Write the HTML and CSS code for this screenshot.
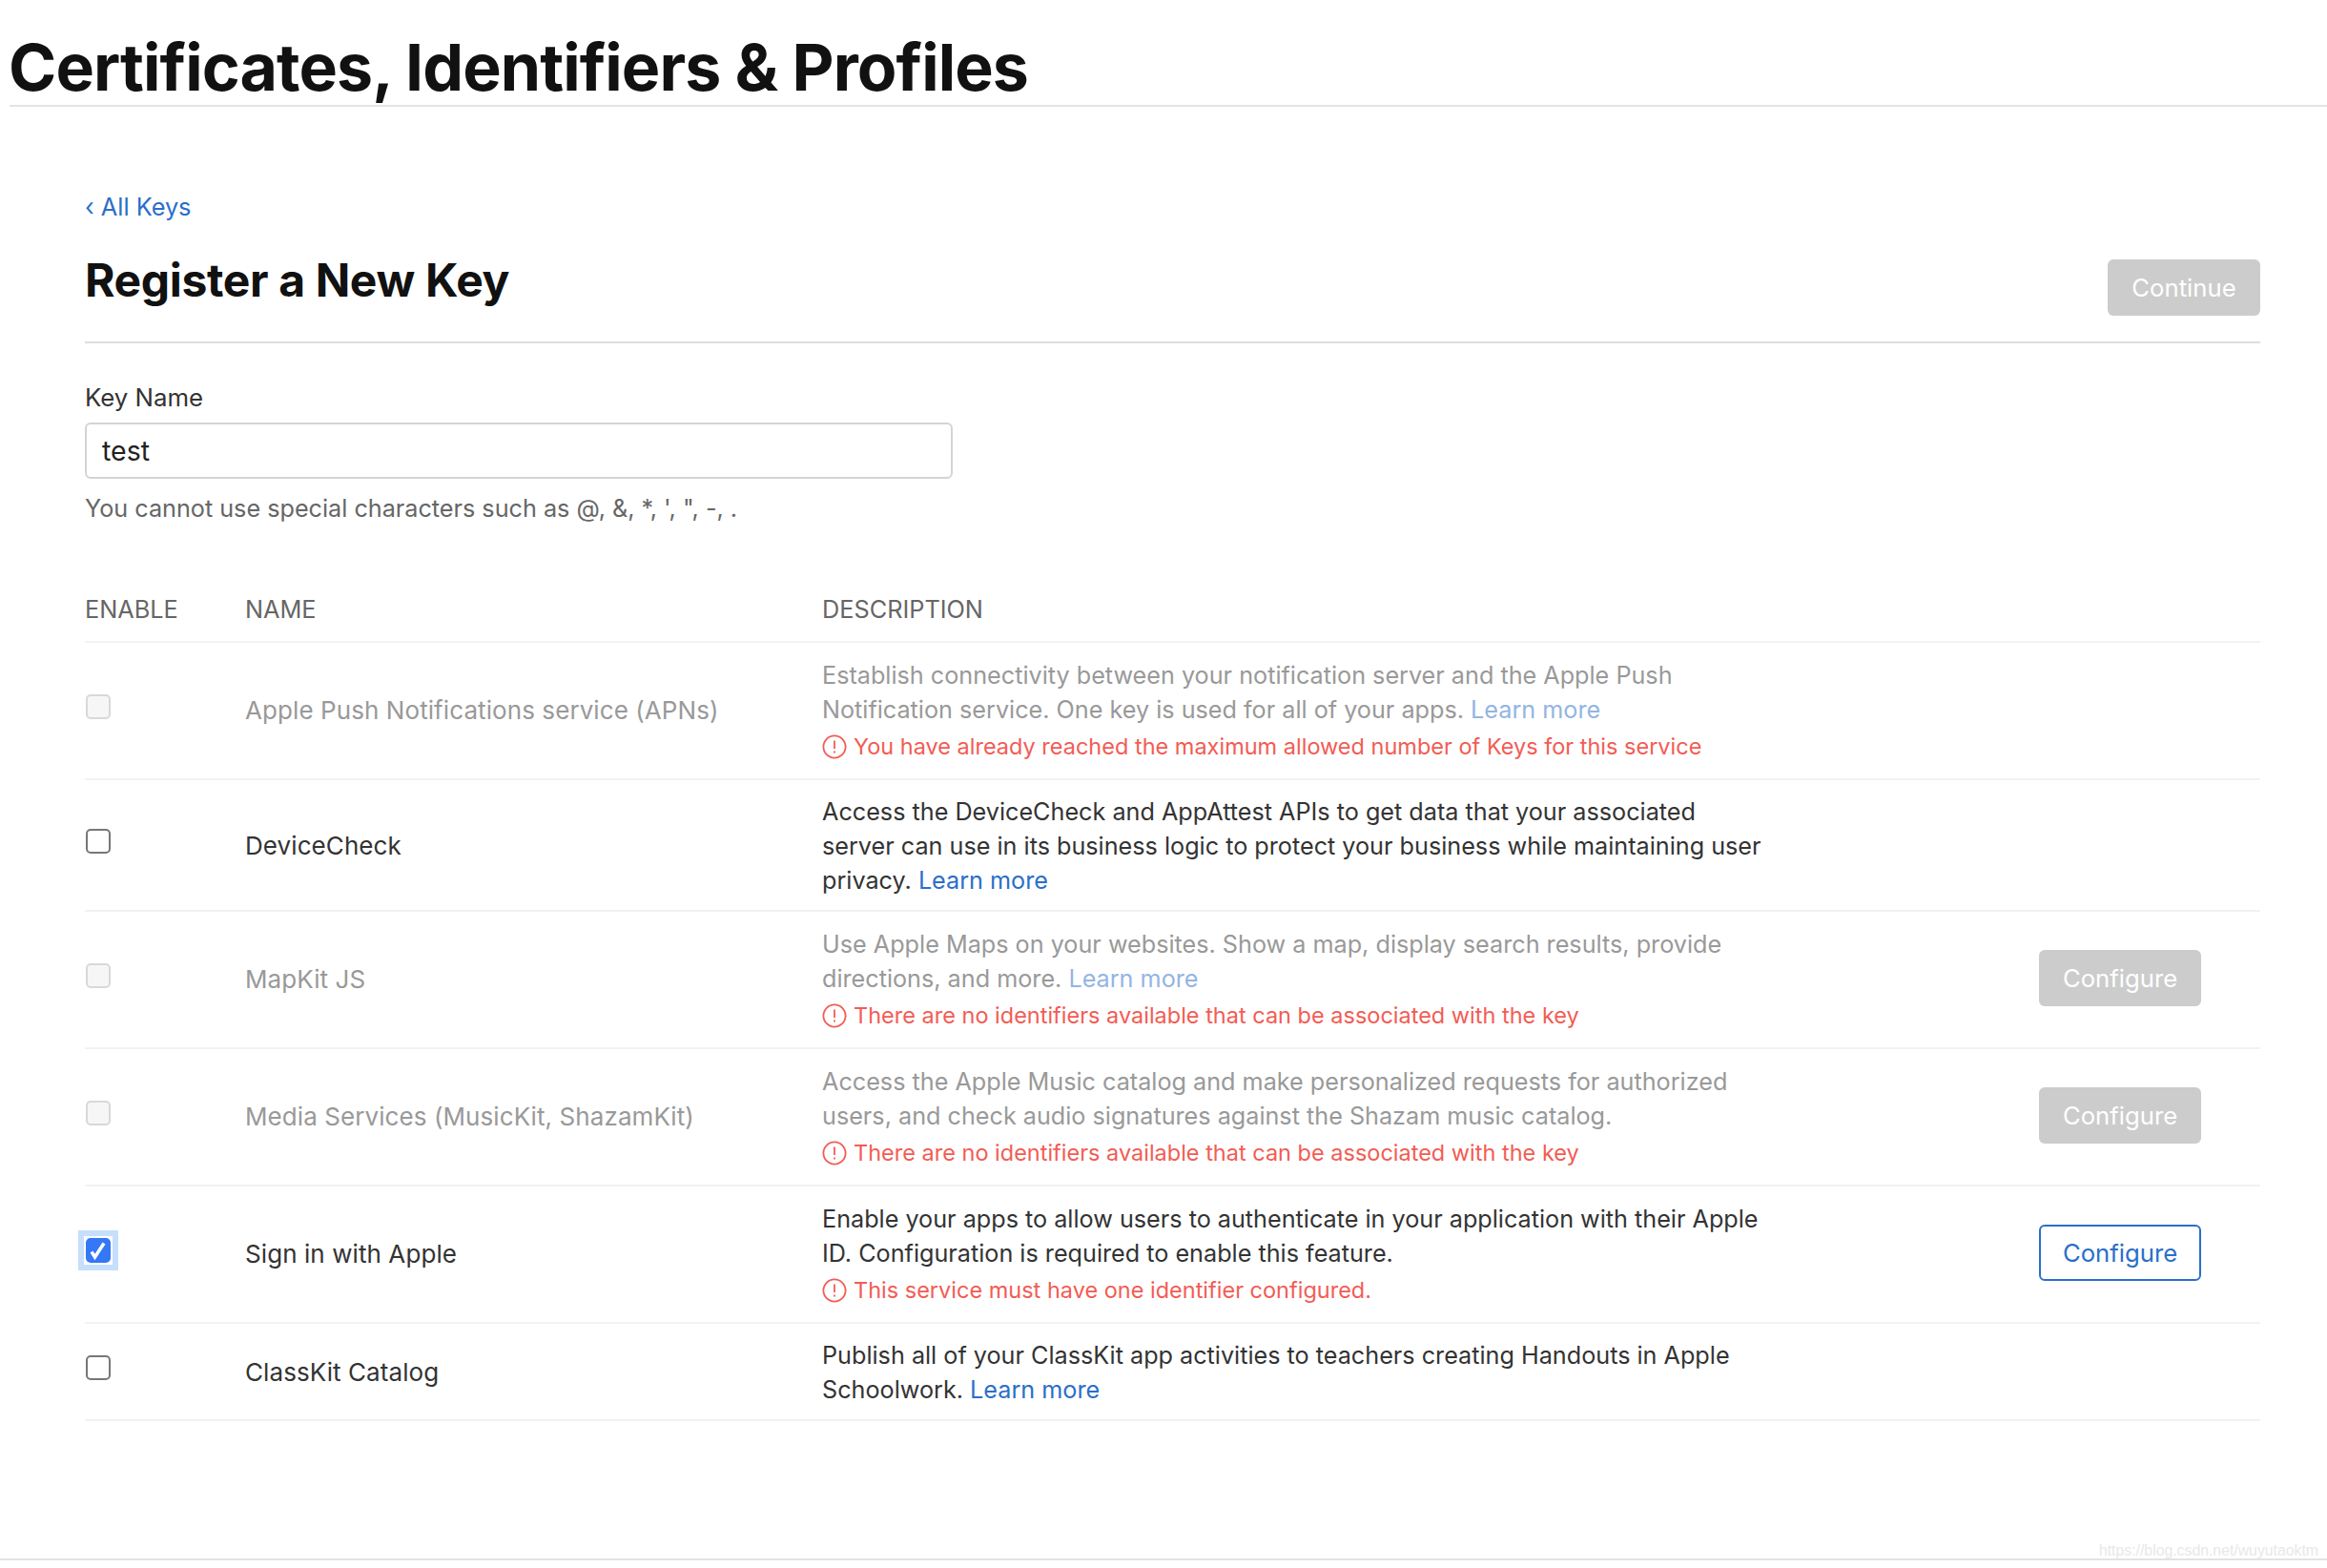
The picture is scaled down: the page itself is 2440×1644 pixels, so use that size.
FILE: index.html
```html
<!DOCTYPE html>
<html lang="en">
<head>
    <meta charset="UTF-8">
    <title>Certificates, Identifiers &amp; Profiles</title>
    <link rel="stylesheet" href="styles.css">
</head>
<body>
    <header class="top">
        <h1>Certificates, Identifiers &amp; Profiles</h1>
    </header>
    <main class="content">
        <a class="back" href="#">‹ All Keys</a>
        <div class="title-row">
            <h2>Register a New Key</h2>
            <button class="btn btn-off btn-continue">Continue</button>
        </div>
        <label class="field-label" for="keyname">Key Name</label>
        <input id="keyname" class="field" type="text" value="test">
        <p class="hint">You cannot use special characters such as @, &amp;, *, ', ", -, .</p>

        <div class="thead">
            <div>ENABLE</div>
            <div>NAME</div>
            <div>DESCRIPTION</div>
        </div>

        <div class="row row-a off">
            <div class="check-cell"><span class="check"></span></div>
            <div class="name">Apple Push Notifications service (APNs)</div>
            <div class="desc">
                <p>Establish connectivity between your notification server and the Apple Push Notification service. One key is used for all of your apps. <a href="#">Learn more</a></p>
                <p class="warn"><svg class="warn-icon" viewBox="0 0 26 26"><circle cx="13" cy="13" r="11.6"/><path d="M13 6.5v8.5M13 17.6v2"/></svg>You have already reached the maximum allowed number of Keys for this service</p>
            </div>
            <div></div>
        </div>

        <div class="row row-b">
            <div class="check-cell"><span class="check"></span></div>
            <div class="name">DeviceCheck</div>
            <div class="desc">
                <p>Access the DeviceCheck and AppAttest APIs to get data that your associated server can use in its business logic to protect your business while maintaining user privacy. <a href="#">Learn more</a></p>
            </div>
            <div></div>
        </div>

        <div class="row row-c off">
            <div class="check-cell"><span class="check"></span></div>
            <div class="name">MapKit JS</div>
            <div class="desc">
                <p>Use Apple Maps on your websites. Show a map, display search results, provide directions, and more. <a href="#">Learn more</a></p>
                <p class="warn"><svg class="warn-icon" viewBox="0 0 26 26"><circle cx="13" cy="13" r="11.6"/><path d="M13 6.5v8.5M13 17.6v2"/></svg>There are no identifiers available that can be associated with the key</p>
            </div>
            <div class="action"><button class="btn btn-off">Configure</button></div>
        </div>

        <div class="row row-c off">
            <div class="check-cell"><span class="check"></span></div>
            <div class="name">Media Services (MusicKit, ShazamKit)</div>
            <div class="desc">
                <p>Access the Apple Music catalog and make personalized requests for authorized users, and check audio signatures against the Shazam music catalog.</p>
                <p class="warn"><svg class="warn-icon" viewBox="0 0 26 26"><circle cx="13" cy="13" r="11.6"/><path d="M13 6.5v8.5M13 17.6v2"/></svg>There are no identifiers available that can be associated with the key</p>
            </div>
            <div class="action"><button class="btn btn-off">Configure</button></div>
        </div>

        <div class="row row-c">
            <div class="check-cell"><span class="check-focus"><span class="check checked"><svg viewBox="2 2 22 22"><path d="M6 14.5l3.5 5.5L19 5.5"/></svg></span></span></div>
            <div class="name">Sign in with Apple</div>
            <div class="desc">
                <p>Enable your apps to allow users to authenticate in your application with their Apple ID. Configuration is required to enable this feature.</p>
                <p class="warn"><svg class="warn-icon" viewBox="0 0 26 26"><circle cx="13" cy="13" r="11.6"/><path d="M13 6.5v8.5M13 17.6v2"/></svg>This service must have one identifier configured.</p>
            </div>
            <div class="action"><button class="btn btn-line">Configure</button></div>
        </div>

        <div class="row row-d">
            <div class="check-cell"><span class="check"></span></div>
            <div class="name">ClassKit Catalog</div>
            <div class="desc">
                <p>Publish all of your ClassKit app activities to teachers creating Handouts in Apple Schoolwork. <a href="#">Learn more</a></p>
            </div>
            <div></div>
        </div>
    </main>
    <footer class="bottom">
        <span class="mark">https://blog.csdn.net/wuyutaoktm</span>
    </footer>
</body>
</html>
```

FILE: styles.css
```css
body {
    margin: 0;
    height: 1644px;
    overflow: hidden;
    display: flex;
    flex-direction: column;
    background: #fff;
    color: #333;
    font-family: Inter, "Liberation Sans", sans-serif;
    font-size: 26px;
    line-height: 36px;
}
a {
    color: #2a6fc9;
    text-decoration: none;
}
p {
    margin: 0;
}
.top {
    margin-left: 10px;
    height: 112px;
    box-sizing: border-box;
    border-bottom: 2px solid #e3e3e3;
}
h1 {
    margin: 0;
    padding-top: 30px;
    font-size: 68px;
    line-height: 80px;
    font-weight: 700;
    letter-spacing: -0.92px;
    text-indent: -1px;
    color: #111;
}
.content {
    flex: 1;
    padding: 87px 70px 0 89px;
}
.back {
    display: block;
    height: 36px;
    font-size: 25.3px;
}
.title-row {
    height: 125px;
    margin-bottom: 39px;
    padding-top: 4px;
    box-sizing: border-box;
    display: flex;
    justify-content: space-between;
    align-items: flex-start;
    border-bottom: 2px solid #dedede;
}
h2 {
    margin: 27px 0 0;
    font-size: 48px;
    line-height: 56px;
    font-weight: 700;
    letter-spacing: -0.36px;
    color: #111;
}
.btn {
    width: 170px;
    height: 59px;
    padding: 0;
    border: 0;
    border-radius: 6px;
    font-family: inherit;
    font-size: 25.7px;
}
.btn-off {
    background: #ccc;
    color: #fff;
}
.btn-continue {
    width: 160px;
    margin-top: 33px;
}
.btn-line {
    background: #fff;
    border: 2px solid #2a6fc9;
    color: #2a6fc9;
}
.field-label {
    display: block;
    height: 36px;
    margin-bottom: 8px;
    font-size: 25.8px;
}
.field {
    display: block;
    width: 910px;
    height: 59px;
    padding: 0 16px;
    box-sizing: border-box;
    border: 2px solid #d4d4d4;
    border-radius: 6px;
    background: #fff;
    color: #222;
    font-family: inherit;
    font-size: 28.5px;
    outline: none;
}
.hint {
    margin-top: 13px;
    color: #666;
    font-size: 25.2px;
}
.thead,
.row {
    display: grid;
    grid-template-columns: 168px 605px 990px 1fr;
    border-bottom: 2px solid #f2f2f2;
    box-sizing: border-box;
}
.thead {
    margin-top: 70px;
    height: 53px;
    color: #666;
    font-size: 25.3px;
    grid-template-columns: 168px 605px 1fr;
}
.row {
    align-items: center;
}
.row-a { height: 144px; }
.row-b { height: 138px; }
.row-c { height: 144px; }
.row-d { height: 102px; }
.name {
    letter-spacing: 0.08px;
}
.desc {
    font-size: 25.2px;
}
.row-b .name,
.row-d .name,
.row-b .desc,
.row-d .desc {
    margin-top: 1px;
}
.off .name,
.off .desc {
    color: #999;
}
.off .desc a {
    color: #93b5e3;
}
.desc .warn {
    display: flex;
    align-items: center;
    margin-top: 3px;
    color: #f25c54;
    font-size: 23.5px;
}
.warn-icon {
    width: 26px;
    height: 26px;
    margin-right: 7px;
    flex: none;
    fill: none;
    stroke: #f25c54;
    stroke-width: 1.8;
}
.check-cell {
    align-self: center;
    margin: -8px 0 0 1px;
}
.check {
    display: block;
    width: 26px;
    height: 26px;
    box-sizing: border-box;
    border: 2px solid #777;
    border-radius: 5px;
    background: #fff;
}
.off .check {
    border-color: #d8d8d8;
    background: #f6f6f6;
}
.check-focus {
    display: block;
    width: 26px;
    margin: -8px;
    padding: 2px;
    border: 6px solid #c6dffc;
    background: #fff;
}
.check.checked {
    background: #3478f6;
    border-color: #3478f6;
}
.check svg {
    display: block;
    width: 100%;
    height: 100%;
    fill: none;
    stroke: #fff;
    stroke-width: 3.5;
}
.action {
    display: flex;
    justify-content: flex-end;
    margin-top: -3px;
    padding-right: 62px;
}
.bottom {
    height: 8px;
    border-top: 2px solid #e3e3e3;
    position: relative;
}
.mark {
    position: absolute;
    right: 9px;
    bottom: 8px;
    font-family: "Liberation Sans", sans-serif;
    font-size: 15.8px;
    line-height: 20px;
    color: #e8e8e8;
}
```
